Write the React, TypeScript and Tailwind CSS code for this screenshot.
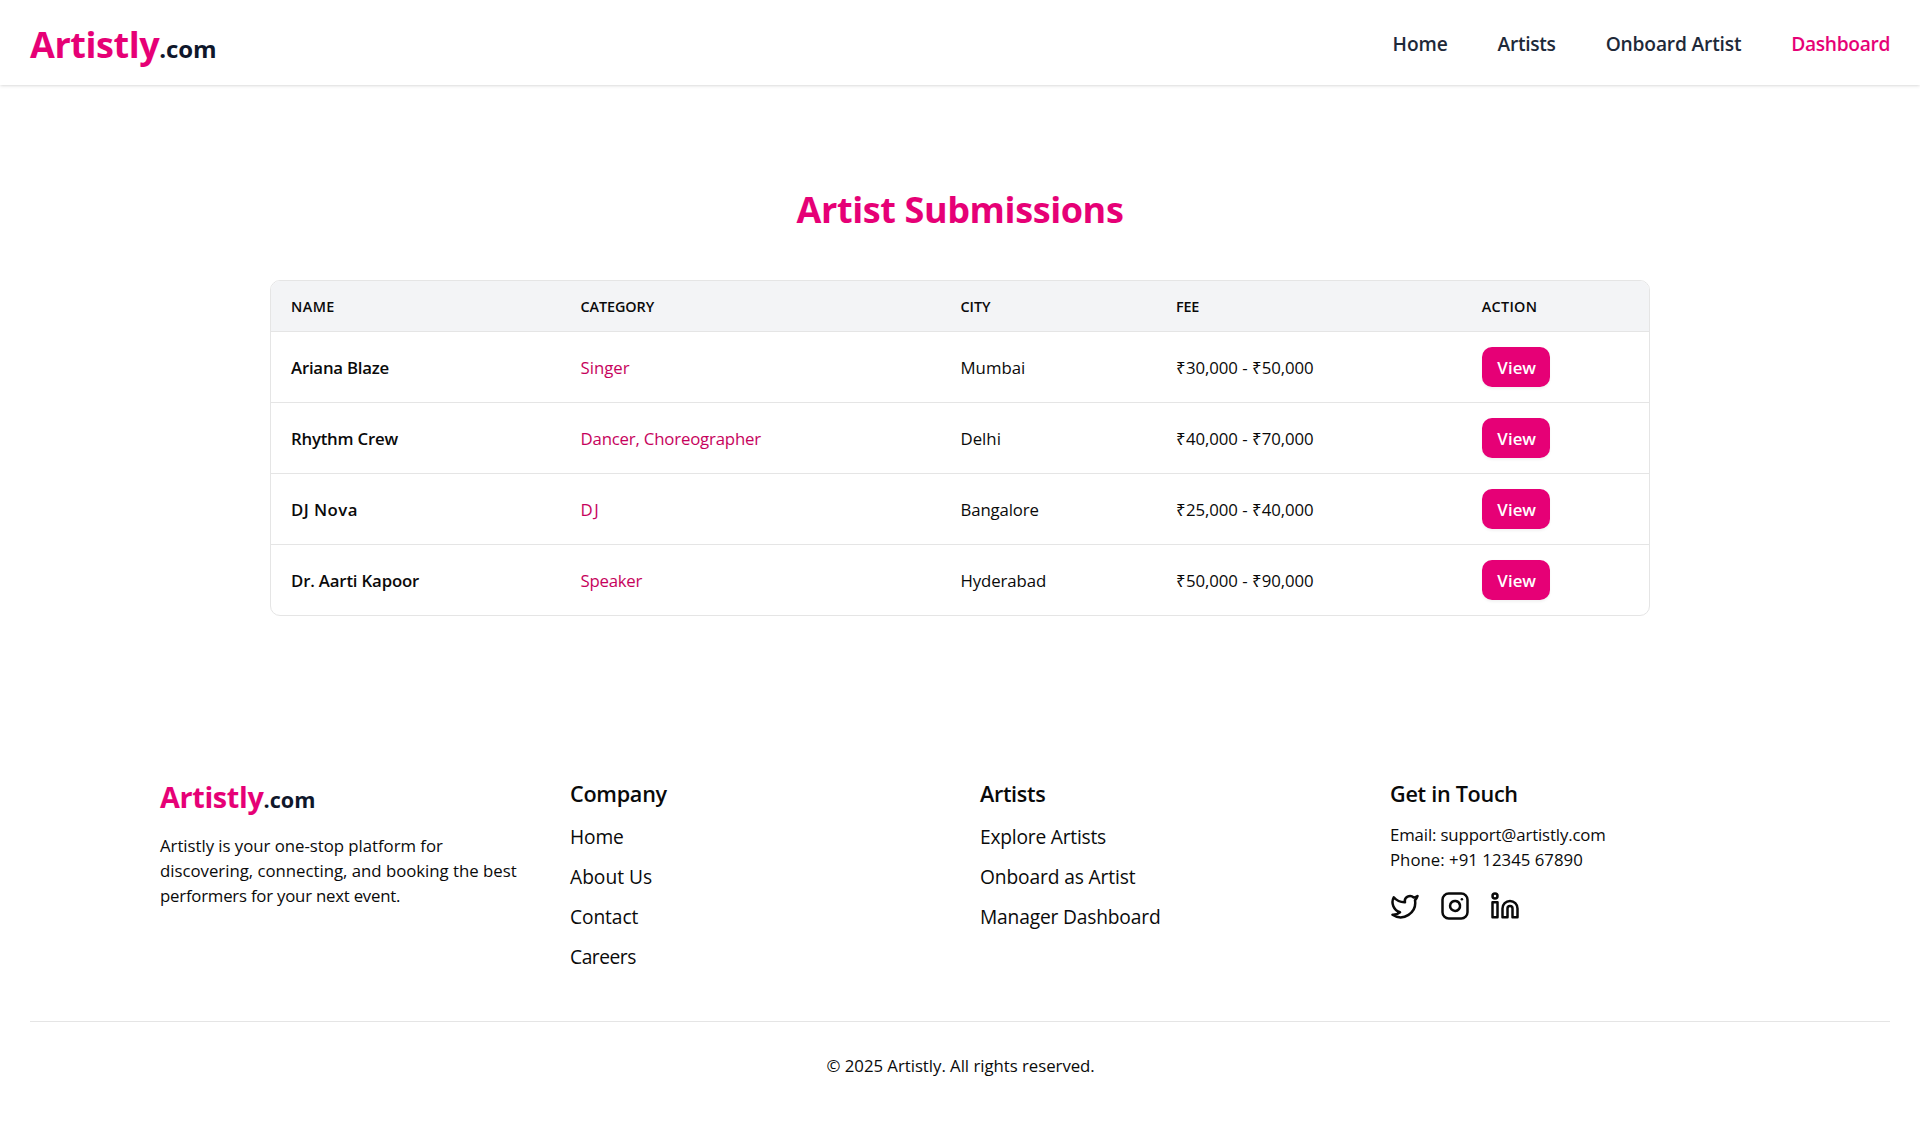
import { Instagram, Linkedin, Twitter } from 'lucide-react'
import { clsx } from 'clsx'

type Label = { text: string; fit: string }

// Text set slightly tighter than its line box.
function T({ text, fit }: Label) {
  return <span className={clsx('text-[0.96em] whitespace-nowrap', fit)}>{text}</span>
}

const nav: (Label & { active?: boolean })[] = [
  { text: 'Home', fit: 'tracking-[-0.006em]' },
  { text: 'Artists', fit: 'tracking-[-0.016em]' },
  { text: 'Onboard Artist', fit: 'tracking-[-0.009em]' },
  { text: 'Dashboard', fit: 'tracking-[-0.018em]', active: true },
]

const columns: Label[] = [
  { text: 'NAME', fit: 'tracking-[0.03em]' },
  { text: 'CATEGORY', fit: 'tracking-[-0.006em]' },
  { text: 'CITY', fit: 'tracking-[-0.003em]' },
  { text: 'FEE', fit: 'tracking-[-0.017em]' },
  { text: 'ACTION', fit: 'tracking-[0.021em]' },
]

const rows: { name: Label; category: Label; city: Label; fee: string }[] = [
  {
    name: { text: 'Ariana Blaze', fit: 'tracking-[-0.013em]' },
    category: { text: 'Singer', fit: 'tracking-[0em]' },
    city: { text: 'Mumbai', fit: 'tracking-normal' },
    fee: '₹30,000 - ₹50,000',
  },
  {
    name: { text: 'Rhythm Crew', fit: 'tracking-[-0.013em]' },
    category: { text: 'Dancer, Choreographer', fit: 'tracking-[-0.011em]' },
    city: { text: 'Delhi', fit: 'tracking-normal' },
    fee: '₹40,000 - ₹70,000',
  },
  {
    name: { text: 'DJ Nova', fit: 'tracking-[0.026em]' },
    category: { text: 'DJ', fit: 'tracking-[0.1em]' },
    city: { text: 'Bangalore', fit: 'tracking-[-0.008em]' },
    fee: '₹25,000 - ₹40,000',
  },
  {
    name: { text: 'Dr. Aarti Kapoor', fit: 'tracking-[-0.01em]' },
    category: { text: 'Speaker', fit: 'tracking-[-0.015em]' },
    city: { text: 'Hyderabad', fit: 'tracking-[-0.006em]' },
    fee: '₹50,000 - ₹90,000',
  },
]

const company: Label[] = [
  { text: 'Home', fit: 'tracking-[-0.006em]' },
  { text: 'About Us', fit: 'tracking-normal' },
  { text: 'Contact', fit: 'tracking-[-0.005em]' },
  { text: 'Careers', fit: 'tracking-[-0.024em]' },
]

const artists: Label[] = [
  { text: 'Explore Artists', fit: 'tracking-[-0.011em]' },
  { text: 'Onboard as Artist', fit: 'tracking-[-0.007em]' },
  { text: 'Manager Dashboard', fit: 'tracking-[-0.009em]' },
]

const about: Label[] = [
  { text: 'Artistly is your one-stop platform for', fit: 'tracking-[-0.002em]' },
  { text: 'discovering, connecting, and booking the best', fit: 'tracking-[-0.001em]' },
  { text: 'performers for your next event.', fit: 'tracking-[-0.013em]' },
]

function Header() {
  return (
    <header className="relative flex items-center justify-between bg-white px-6 pt-[16.8px] pb-[15.2px] shadow-sm">
      <a href="#" className="text-3xl font-bold text-pink-600">
        <T text="Artistly" fit="tracking-[-0.012em]" />
        <span className="text-xl leading-none text-slate-900">
          <T text=".com" fit="tracking-[-0.006em]" />
        </span>
      </a>
      <nav className="flex gap-10 font-semibold">
        {nav.map((item) => (
          <a key={item.text} href="#" className={item.active ? 'text-pink-600' : 'text-gray-800'}>
            <T text={item.text} fit={item.fit} />
          </a>
        ))}
      </nav>
    </header>
  )
}

function Submissions() {
  return (
    <main className="mx-auto max-w-6xl px-6 py-20">
      <h1 className="mb-[39.2px] pt-[0.8px] text-center text-3xl font-bold text-pink-600">
        <T text="Artist Submissions" fit="tracking-[-0.011em]" />
      </h1>
      <div className="overflow-hidden rounded-lg border border-neutral-200">
        <table className="w-full table-fixed border-collapse text-left text-sm">
          <colgroup>
            <col className="w-[231.6px]" />
            <col className="w-[304px]" />
            <col className="w-[172.4px]" />
            <col className="w-[244.6px]" />
            <col />
          </colgroup>
          <thead className="bg-gray-100 text-xs">
            <tr className="border-b border-neutral-200">
              {columns.map((column) => (
                <th key={column.text} className="px-4 pt-[11.6px] pb-[11.6px] font-semibold">
                  <T text={column.text} fit={column.fit} />
                </th>
              ))}
            </tr>
          </thead>
          <tbody>
            {rows.map((row) => (
              <tr key={row.name.text} className="border-b border-neutral-200 last:border-b-0">
                <td className="px-4 pt-[12.8px] pb-[11.2px] font-semibold">
                  <T {...row.name} />
                </td>
                <td className="px-4 pt-[12.8px] pb-[11.2px] text-pink-700">
                  <T {...row.category} />
                </td>
                <td className="px-4 pt-[12.8px] pb-[11.2px]">
                  <T {...row.city} />
                </td>
                <td className="px-4 pt-[12.8px] pb-[11.2px]">
                  <T text={row.fee} fit="tracking-[-0.004em]" />
                </td>
                <td className="px-4 py-3">
                  <button className="flex h-8 w-[54.4px] items-center justify-center rounded-lg bg-pink-600 pt-[1.6px] pl-[1.6px] font-semibold text-white shadow-xs">
                    <T text="View" fit="tracking-[0.004em]" />
                  </button>
                </td>
              </tr>
            ))}
          </tbody>
        </table>
      </div>
    </main>
  )
}

function LinkColumn({ title, links }: { title: Label; links: Label[] }) {
  return (
    <div>
      <h2 className="mb-[8.8px] text-lg font-semibold">
        <T {...title} />
      </h2>
      <ul className="space-y-2">
        {links.map((link) => (
          <li key={link.text}>
            <a href="#">
              <T {...link} />
            </a>
          </li>
        ))}
      </ul>
    </div>
  )
}

function Footer() {
  return (
    <footer className="px-6 py-12">
      <div className="mx-auto grid max-w-7xl grid-cols-4 gap-8">
        <div className="pt-[0.8px]">
          <a href="#" className="block text-2xl font-bold text-pink-600">
            <T text="Artistly" fit="tracking-[-0.012em]" />
            <span className="text-lg leading-none text-slate-900">
              <T text=".com" fit="tracking-[0.003em]" />
            </span>
          </a>
          <p className="mt-[13.4px] flex flex-col text-sm">
            {about.map((line) => (
              <span key={line.text}>
                <T {...line} />
              </span>
            ))}
          </p>
        </div>
        <LinkColumn title={{ text: 'Company', fit: 'tracking-[-0.012em]' }} links={company} />
        <LinkColumn title={{ text: 'Artists', fit: 'tracking-[-0.016em]' }} links={artists} />
        <div>
          <h2 className="mb-[8.8px] text-lg font-semibold">
            <T text="Get in Touch" fit="tracking-[-0.013em]" />
          </h2>
          <p className="text-sm">
            <T text="Email: support@artistly.com" fit="tracking-[-0.008em]" />
          </p>
          <p className="text-sm">
            <T text="Phone: +91 12345 67890" fit="tracking-[0.001em]" />
          </p>
          <div className="mt-[15.2px] flex gap-4">
            <Twitter size={24} />
            <Instagram size={24} />
            <Linkedin size={24} />
          </div>
        </div>
      </div>
      <div className="mt-[39.2px] border-t border-neutral-200 pt-[24.8px] pl-px text-center text-sm">
        <T text="© 2025 Artistly. All rights reserved." fit="tracking-[-0.002em]" />
      </div>
    </footer>
  )
}

export default function App() {
  return (
    <div className="bg-white font-['Open_Sans',sans-serif] text-neutral-950 [zoom:1.25]">
      <Header />
      <Submissions />
      <Footer />
    </div>
  )
}
